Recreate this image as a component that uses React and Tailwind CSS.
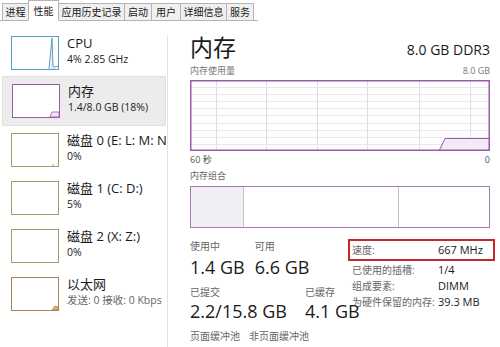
const tabs = [
  { label: "进程", w: "w-[27px]" },
  { label: "性能", w: "w-[31px]", active: true },
  { label: "应用历史记录", w: "w-[67px]" },
  { label: "启动", w: "w-[28px]" },
  { label: "用户", w: "w-[30px]" },
  { label: "详细信息", w: "w-[47px]" },
  { label: "服务", w: "w-[28px]" },
];

function Thumb({ color, kind }) {
  return (
    <svg width="48" height="34" viewBox="0 0 48 34" className="shrink-0">
      <rect x="0.5" y="0.5" width="47" height="33" fill="white" stroke={color} />
      {kind === "cpu" && (
        <>
          <path d="M40 33 L41 2 L42 30 L45 33 Z" fill="#d8eaf3" />
          <polyline points="38,33 41,2 42,30 44,31 47,30" fill="none" stroke={color} strokeWidth="1" />
        </>
      )}
      {kind === "mem" && (
        <path d="M38 33 L40 28 L47 28 L47 33 Z" fill="#f1e6f3" stroke={color} strokeWidth="0.8" />
      )}
      {kind === "disk" && <line x1="42" y1="33" x2="42" y2="31" stroke={color} />}
      {kind === "net" && (
        <path d="M41 33 L44 29 L47 30 L47 33 Z" fill="#e8b070" stroke={color} strokeWidth="0.8" />
      )}
    </svg>
  );
}

const items = [
  { title: "CPU", sub: "4% 2.85 GHz", color: "#5a9cc0", kind: "cpu" },
  { title: "内存", sub: "1.4/8.0 GB (18%)", color: "#9b5aa8", kind: "mem", active: true },
  { title: "磁盘 0 (E: L: M: N", sub: "0%", color: "#8fa86c", kind: "disk" },
  { title: "磁盘 1 (C: D:)", sub: "5%", color: "#8fa86c", kind: "none" },
  { title: "磁盘 2 (X: Z:)", sub: "0%", color: "#8fa86c", kind: "none" },
  { title: "以太网", sub: "发送: 0 接收: 0 Kbps", color: "#a8845c", kind: "net" },
];

const details = [
  ["速度:", "667 MHz"],
  ["已使用的插槽:", "1/4"],
  ["组成要素:", "DIMM"],
  ["为硬件保留的内存:", "39.3 MB"],
];

export default function App() {
  const vlines = [26, 76, 127, 177, 229, 280];
  const hlines = [7, 14, 21, 28, 35, 43, 50, 57, 64];

  return (
    <div className="w-[500px] h-[347px] bg-white overflow-hidden text-[#1a1a1a] font-['Open_Sans','Noto_Sans_CJK_SC',sans-serif]">
      {/* tabs */}
      <div className="flex items-end h-[21px] pl-[2px]">
        {tabs.map((t) => (
          <div
            key={t.label}
            className={`${t.w} shrink-0 whitespace-nowrap flex items-center justify-center text-[10px] leading-none border border-[#b4b4b4] -ml-px first:ml-0 ${
              t.active ? "h-[21px] bg-white border-b-white relative z-10" : "h-[18px] bg-[#f0f0f0]"
            }`}
          >
            {t.label}
          </div>
        ))}
      </div>
      <div className="h-0 w-[258px] border-t border-[#b4b4b4] -mt-px" />

      <div className="flex h-[326px]">
        {/* sidebar */}
        <div className="w-[168px] shrink-0 pt-[8px] pr-[2px] relative">
          <div className="absolute right-0 top-[14px] bottom-0 border-r border-[#e3e3e3]" />
          {items.map((it) => (
            <div
              key={it.title}
              className={`flex h-[48px] pl-[9px] pt-[7px] ml-[2px] ${
                it.active ? "bg-[#ececec] border border-[#e0e0e0] -mt-px h-[50px]" : ""
              }`}
            >
              <Thumb color={it.color} kind={it.kind} />
              <div className="ml-[8px] whitespace-nowrap">
                <div className="text-[13px] leading-[16px] -mt-[1px]">{it.title}</div>
                <div className={`text-[10.5px] leading-[14px] mt-[1px] ${it.kind === "net" ? "text-[#666]" : "text-[#222]"}`}>
                  {it.sub}
                </div>
              </div>
            </div>
          ))}
        </div>

        {/* main */}
        <div className="flex-1 pl-[22px] pr-[10px] pt-[12px]">
          <div className="flex items-end justify-between h-[28px]">
            <div className="text-[23px] leading-[28px]">内存</div>
            <div className="text-[14px] leading-[18px] mb-[2px]">8.0 GB DDR3</div>
          </div>
          <div className="flex justify-between text-[9px] leading-[12px] text-[#777] mt-[4px]">
            <span>内存使用量</span>
            <span>8.0 GB</span>
          </div>
          <svg width="300" height="71" viewBox="0 0 300 71" className="block mt-[3px]">
            {vlines.map((x) => (
              <line key={"v" + x} x1={x + 0.5} y1="0" x2={x + 0.5} y2="71" stroke="#e2dbe6" />
            ))}
            {hlines.map((y) => (
              <line key={"h" + y} x1="0" y1={y + 0.5} x2="300" y2={y + 0.5} stroke="#ece6ef" />
            ))}
            <path d="M249 71 L255 58 L300 58 L300 71 Z" fill="#f2eaf4" />
            <polyline points="249,71 255,58.5 300,58.5" fill="none" stroke="#9b5aa8" />
            <rect x="0.75" y="0.75" width="298.5" height="69.5" fill="none" stroke="#9b5aa8" strokeWidth="1.5" />
          </svg>
          <div className="flex justify-between text-[9px] leading-[12px] text-[#555] mt-[3px]">
            <span>60 秒</span>
            <span>0</span>
          </div>
          <div className="text-[9px] leading-[12px] text-[#666] mt-[4px]">内存组合</div>
          <div className="flex h-[42px] mt-[4px] border-[1.5px] border-[#a57cb0]">
            <div className="w-[53px] bg-[#f2eff4] border-r-[1.5px] border-[#c9bfcc]" />
            <div className="w-[155px] border-r-[1.5px] border-[#c9bfcc]" />
            <div className="flex-1" />
          </div>

          {/* stats + details */}
          <div className="flex mt-[11px]">
            <div className="w-[162px] shrink-0">
              <div className="flex">
                <div>
                  <div className="text-[10px] leading-[14px] text-[#666]">使用中</div>
                  <div className="text-[18px] leading-[24px] mt-[2px]">1.4 GB</div>
                </div>
                <div className="ml-[10px]">
                  <div className="text-[10px] leading-[14px] text-[#666]">可用</div>
                  <div className="text-[18px] leading-[24px] mt-[2px]">6.6 GB</div>
                </div>
              </div>
              <div className="flex mt-[6px] whitespace-nowrap">
                <div>
                  <div className="text-[10px] leading-[14px] text-[#666]">已提交</div>
                  <div className="text-[18px] leading-[24px]">2.2/15.8 GB</div>
                </div>
                <div className="ml-[18px]">
                  <div className="text-[10px] leading-[14px] text-[#666]">已缓存</div>
                  <div className="text-[18px] leading-[24px]">4.1 GB</div>
                </div>
              </div>
              <div className="flex mt-[6px] whitespace-nowrap text-[10px] leading-[14px] text-[#666]">
                <span>页面缓冲池</span>
                <span className="ml-[9px]">非页面缓冲池</span>
              </div>
            </div>
            <div className="flex-1">
              {details.map(([k, v], i) => (
                <div
                  key={k}
                  className={`flex items-center whitespace-nowrap ${
                    i === 0 ? "border-2 border-[#c8262c] h-[22px] -ml-[4px] pl-[2px] mr-[-5px] mb-[1px]" : "h-[16px]"
                  }`}
                >
                  <span className="w-[86px] text-[10px] text-[#666]">{k}</span>
                  <span className="text-[11px]">{v}</span>
                </div>
              ))}
            </div>
          </div>
        </div>
      </div>
    </div>
  );
}
